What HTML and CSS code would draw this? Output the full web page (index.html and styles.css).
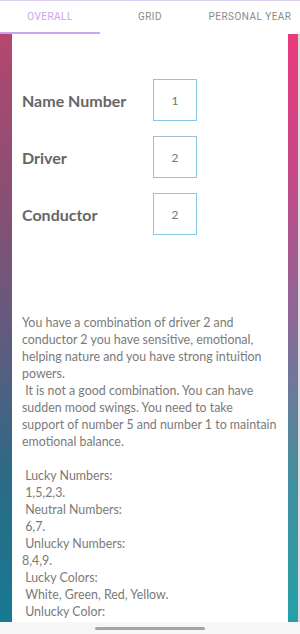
FILE: index.html
```html
<!DOCTYPE html>
<html>

<head>
    <meta charset="utf-8" />
    <title>Numerology - Overall</title>
    <meta name="viewport" content="width=device-width, initial-scale=1">
    <link rel="stylesheet" href="styles.css">
</head>

<body>
    <div class="tabs">
        <div class="tab tab-active">OVERALL</div>
        <div class="tab">GRID</div>
        <div class="tab">PERSONAL YEAR</div>
    </div>
    <div class="frame">
        <div class="strip strip-left"></div>
        <div class="content">
            <div class="rows">
                <div class="row">
                    <span class="row-label">Name Number</span>
                    <span class="row-box">1</span>
                </div>
                <div class="row">
                    <span class="row-label">Driver</span>
                    <span class="row-box">2</span>
                </div>
                <div class="row">
                    <span class="row-label">Conductor</span>
                    <span class="row-box">2</span>
                </div>
            </div>
            <div class="reading">You have a combination of driver 2 and conductor 2 you have sensitive, emotional, helping nature and you have strong intuition powers.
 It is not a good combination. You can have sudden mood swings. You need to take<br>support of number 5 and number 1 to maintain emotional balance.

 Lucky Numbers:
 1,5,2,3.
 Neutral Numbers:
 6,7.
 Unlucky Numbers:
8,4,9.
 Lucky Colors:
 White, Green, Red, Yellow.
 Unlucky Color:</div>
        </div>
        <div class="strip strip-right"></div>
    </div>
    <div class="navbar">
        <div class="navbar-handle"></div>
    </div>
</body>

</html>
```

FILE: styles.css
```css
body,
html {
    margin: 0;
    width: 100%;
    height: 100%;
    overflow: hidden;
    background: #fff;
}

body {
    display: flex;
    flex-direction: column;
}

.tabs {
    display: flex;
    height: 33px;
    border-top: 1px solid #dcd0f4;
    flex-shrink: 0;
}

.tab {
    flex: 1;
    display: flex;
    align-items: center;
    justify-content: center;
    font-family: Roboto, "Liberation Sans", sans-serif;
    font-size: 10px;
    letter-spacing: 0.45px;
    color: #8a8a8a;
    border-bottom: 2px solid transparent;
    box-sizing: border-box;
}

.tab-active {
    color: #c7a3ef;
    border-bottom-color: #c9a5f0;
}

.frame {
    flex: 1;
    display: flex;
    overflow: hidden;
}

.strip {
    width: 12px;
    flex-shrink: 0;
}

.strip-left {
    background: linear-gradient(#b4476f, #8e4e72 25%, #635a7e 50%, #2d6a86 75%, #157a92);
}

.strip-right {
    background: linear-gradient(#ea3a7c, #c24a88 25%, #886a98 50%, #438e9e 75%, #26a0a8);
    border-right: 2px solid #dcdcdc;
    width: 10px;
}

.content {
    flex: 1;
    padding: 45px 4px 0 10px;
    overflow: hidden;
}

.rows {
    display: flex;
    flex-direction: column;
    gap: 15px;
}

.row {
    display: flex;
    align-items: center;
}

.row-label {
    width: 131px;
    font-family: Lato, "Open Sans", sans-serif;
    font-weight: bold;
    font-size: 16px;
    color: #666;
}

.row-box {
    width: 42px;
    height: 40px;
    display: flex;
    align-items: center;
    justify-content: center;
    border: 1px solid #a9bcc8;
    border-right-color: #86c8e6;
    border-bottom-color: #86c8e6;
    font-family: Lato, "Open Sans", sans-serif;
    font-size: 12px;
    color: #777;
}

.reading {
    margin-top: 79px;
    white-space: pre-wrap;
    font-family: Lato, "Open Sans", sans-serif;
    font-size: 12.4px;
    line-height: 17px;
    color: #7a7a7a;
}

.navbar {
    height: 12px;
    flex-shrink: 0;
    background: #f6f6f6;
    display: flex;
    justify-content: center;
    align-items: center;
}

.navbar-handle {
    width: 110px;
    height: 3px;
    border-radius: 2px;
    background: #a4a4a4;
}
```
